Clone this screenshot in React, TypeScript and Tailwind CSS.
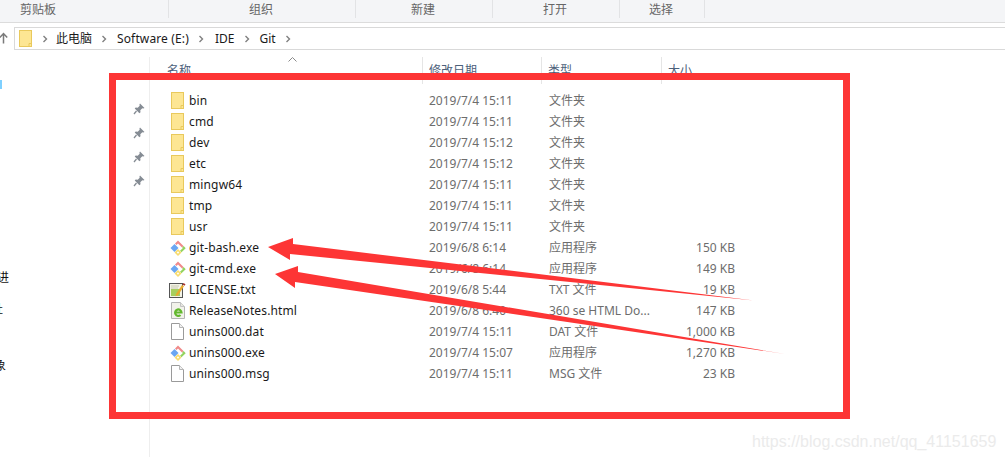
const rows = [
  { name: 'bin', date: '2019/7/4 15:11', type: '文件夹', size: '', icon: 'folder' },
  { name: 'cmd', date: '2019/7/4 15:11', type: '文件夹', size: '', icon: 'folder' },
  { name: 'dev', date: '2019/7/4 15:12', type: '文件夹', size: '', icon: 'folder' },
  { name: 'etc', date: '2019/7/4 15:12', type: '文件夹', size: '', icon: 'folder' },
  { name: 'mingw64', date: '2019/7/4 15:11', type: '文件夹', size: '', icon: 'folder' },
  { name: 'tmp', date: '2019/7/4 15:11', type: '文件夹', size: '', icon: 'folder' },
  { name: 'usr', date: '2019/7/4 15:11', type: '文件夹', size: '', icon: 'folder' },
  { name: 'git-bash.exe', date: '2019/6/8 6:14', type: '应用程序', size: '150 KB', icon: 'git' },
  { name: 'git-cmd.exe', date: '2019/6/8 6:14', type: '应用程序', size: '149 KB', icon: 'git' },
  { name: 'LICENSE.txt', date: '2019/6/8 5:44', type: 'TXT 文件', size: '19 KB', icon: 'txt' },
  { name: 'ReleaseNotes.html', date: '2019/6/8 6:40', type: '360 se HTML Do...', size: '147 KB', icon: 'html' },
  { name: 'unins000.dat', date: '2019/7/4 15:11', type: 'DAT 文件', size: '1,000 KB', icon: 'file' },
  { name: 'unins000.exe', date: '2019/7/4 15:07', type: '应用程序', size: '1,270 KB', icon: 'git' },
  { name: 'unins000.msg', date: '2019/7/4 15:11', type: 'MSG 文件', size: '23 KB', icon: 'file' },
];

function FolderIcon() {
  return (
    <svg width="13" height="17" viewBox="0 0 13 17" className="shrink-0">
      <rect x="0.5" y="0.5" width="12" height="16" fill="#fde693" stroke="#e9c95c" />
      <path d="M10 16.500v-3h2.500" fill="none" stroke="#e9c95c" />
    </svg>
  );
}

function GitIcon() {
  return (
    <svg width="16" height="16" viewBox="0 0 16 16">
      <path d="M.5 8l4-4 4 4-4 4z" fill="#6aa6f2" />
      <path d="M5 3.500L8 .5l5.500 5.500L12 7.500 8 3.500 6.500 5z" fill="#f08a8a" />
      <path d="M12.300 7.200l1.400-1.200 2 2.300-4.200 3.900L10 10.700l2.700-2.400z" fill="#93d35f" />
      <path d="M4.500 12.500L8 9l3.500 3.500L8 16z" fill="#f7dc6f" />
      <path d="M6.800 12.500L8 11.300l1.200 1.200L8 13.700z" fill="#ffffff" />
    </svg>
  );
}

function FileIcon() {
  return (
    <svg width="13" height="17" viewBox="0 0 13 17">
      <path d="M.5.500h8l4 4v12H.5z" fill="#fff" stroke="#9a9a9a" />
      <path d="M8.500.500v4h4" fill="#f0f0f0" stroke="#b5b5b5" />
    </svg>
  );
}

function TxtIcon() {
  return (
    <svg width="17" height="16" viewBox="0 0 17 16">
      <rect x="0.500" y="1.500" width="13" height="14" fill="#f3f3e6" stroke="#555555" />
      <path d="M2 4h8M2 6h7" stroke="#c8c8b0" />
      <path d="M2 7h9v7H2z" fill="#a6cf5e" />
      <path d="M7 12l6-9 2 1.200-6 9-2.500 1z" fill="#e8aa2e" />
      <path d="M13.500 2.500l1-1.500 2 1.200-1 1.500z" fill="#a8322a" />
    </svg>
  );
}

function HtmlIcon() {
  return (
    <svg width="14" height="17" viewBox="0 0 14 17">
      <path d="M.5.500h9l4 4v12H.5z" fill="#f2f2ea" stroke="#b4b4b4" />
      <path d="M9.500.500v4h4" fill="#e6e6e0" stroke="#c4c4c4" />
      <path d="M4.500 10.500h6a3.200 3.200 0 1 0-1 2.500" fill="none" stroke="#62b82e" strokeWidth="2.200" />
    </svg>
  );
}

function PinIcon() {
  return (
    <svg width="12" height="12" viewBox="0 0 12 12">
      <path d="M7 .5l4.500 4.500-1.200.6-1-.3-2 2 .2 2L6.400 10.300 1.700 5.600l1-1 2 .2 2-2-.3-1z" fill="#858c94" />
      <path d="M3.500 8L1 11" stroke="#858c94" strokeWidth="1.300" />
    </svg>
  );
}

function Chevron() {
  return (
    <svg width="6" height="8" viewBox="0 0 6 8" className="shrink-0">
      <path d="M1.500 1l3 3-3 3" fill="none" stroke="#808080" strokeWidth="1.400" />
    </svg>
  );
}

function RowIcon({ kind }: { kind: string }) {
  if (kind === 'folder') return <FolderIcon />;
  if (kind === 'git') return <GitIcon />;
  if (kind === 'txt') return <TxtIcon />;
  if (kind === 'html') return <HtmlIcon />;
  return <FileIcon />;
}

export default function App() {
  return (
    <div className="relative w-[1005px] h-[457px] overflow-hidden bg-white text-[12px] font-['Noto_Sans','Noto_Sans_CJK_SC',sans-serif]">
      {/* ribbon */}
      <div className="flex h-[23px] bg-[#f4f5f7] border-b border-[#dcdcdc] text-[#666666]">
        <div className="w-[169px] pl-[20px] border-r border-[#e2e3e5] h-[18px] leading-[20px]">剪贴板</div>
        <div className="w-[187px] text-center pr-[2px] border-r border-[#e2e3e5] h-[18px] leading-[20px]">组织</div>
        <div className="w-[137px] text-center pr-[2px] border-r border-[#e2e3e5] h-[18px] leading-[20px]">新建</div>
        <div className="w-[127px] text-center pr-[2px] border-r border-[#e2e3e5] h-[18px] leading-[20px]">打开</div>
        <div className="w-[85px] text-center pr-[2px] border-r border-[#e2e3e5] h-[18px] leading-[20px]">选择</div>
      </div>

      {/* address bar */}
      <div className="flex items-start h-[34px] pt-[4px]">
        <div className="w-[14px] shrink-0 overflow-hidden pt-[5px]">
          <svg width="9" height="12" viewBox="0 0 9 12" className="-ml-[1px]">
            <path d="M4.500 1.500v10M.8 5.500l3.700-4 3.700 4" fill="none" stroke="#7a7a7a" strokeWidth="1.500" />
          </svg>
        </div>
        <div className="flex-1 h-[23px] flex items-center border border-r-0 border-[#d9d9d9] pl-[4px] text-[#1a1a1a]">
          <FolderIcon />
          <span className="ml-[10px]"><Chevron /></span>
          <span className="ml-[8px]">此电脑</span>
          <span className="ml-[9px]"><Chevron /></span>
          <span className="ml-[10px] tracking-[0.13px]">Software (E:)</span>
          <span className="ml-[9px]"><Chevron /></span>
          <span className="ml-[11px]">IDE</span>
          <span className="ml-[10px]"><Chevron /></span>
          <span className="ml-[9px]">Git</span>
          <span className="ml-[9px]"><Chevron /></span>
        </div>
      </div>

      <div className="flex">
        {/* nav pane */}
        <div className="w-[150px] h-[400px] shrink-0 border-r border-[#eeeeee] flex">
          <div className="w-[133px] flex flex-col text-[#111111]">
            <div className="w-[2px] h-[9px] mt-[23px] bg-[#7fd0ff]" />
            <div className="h-[13px] mt-[182px] w-[9px] overflow-hidden flex justify-end leading-[13px]">进</div>
            <div className="h-[13px] mt-[19px] w-[3px] overflow-hidden flex justify-end leading-[13px]">社</div>
            <div className="h-[13px] mt-[43px] w-[6px] overflow-hidden flex justify-end leading-[13px]">象</div>
          </div>
          <div className="flex flex-col gap-[12px] pt-[46px]">
            <PinIcon />
            <PinIcon />
            <PinIcon />
            <PinIcon />
          </div>
        </div>

        {/* file list */}
        <div className="flex-1">
          <div className="flex h-[27px] text-[#4c607a]">
            <div className="relative w-[273px] pl-[17px] pt-[5px] border-r border-[#e5e5e5]">
              名称
              <svg width="9" height="5" viewBox="0 0 9 5" className="absolute left-[138px] top-0">
                <path d="M.5 4.500l4-4 4 4" fill="none" stroke="#8a8a8a" />
              </svg>
            </div>
            <div className="w-[119px] pl-[6px] pt-[5px] border-r border-[#e5e5e5]">修改日期</div>
            <div className="w-[120px] pl-[6px] pt-[5px] border-r border-[#e5e5e5]">类型</div>
            <div className="pl-[6px] pt-[5px]">大小</div>
          </div>
          <div className="pt-[6px]">
            {rows.map((r) => (
              <div key={r.name} className="flex items-center h-[21px]">
                <div className="w-[39px] shrink-0 flex justify-center pl-[16px]">
                  <RowIcon kind={r.icon} />
                </div>
                <div className="w-[240px] shrink-0 text-[#1a1a1a] tracking-[0.13px]">{r.name}</div>
                <div className="w-[120px] shrink-0 text-[#6d6d6d]">{r.date}</div>
                <div className="w-[120px] shrink-0 text-[#6d6d6d]">{r.type}</div>
                <div className="w-[66px] shrink-0 text-right text-[#6d6d6d]">{r.size}</div>
              </div>
            ))}
          </div>
        </div>
      </div>

      {/* annotations */}
      <div className="absolute left-[109px] top-[73px] w-[741px] h-[346px] border-[7px] border-[#fd3535]" />
      <svg width="1005" height="457" viewBox="0 0 1005 457" className="absolute left-0 top-0">
        <path d="M268 247L293 238L293 244L754 300.500L290 254L290 260Z" fill="#fd3535" />
        <path d="M275 274L298 266L298 272L785 354L295 282L295 288Z" fill="#fd3535" />
      </svg>
      <div className="absolute left-[752px] top-[430px] text-[16px] text-[#ebebeb] font-['Liberation_Sans',sans-serif]">
        https://blog.csdn.net/qq_41151659
      </div>
    </div>
  );
}
